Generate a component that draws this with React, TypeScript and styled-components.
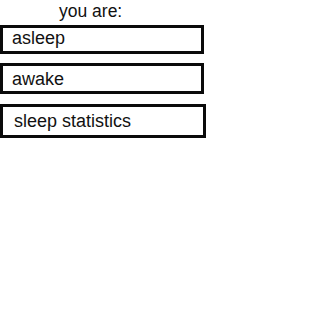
import React from "react";
import styled, { createGlobalStyle } from "styled-components";

const Global = createGlobalStyle`
  html, body {
    margin: 0;
    padding: 0;
    background: #ffffff;
  }
  body {
    font-family: "Liberation Sans", Arial, sans-serif;
  }
`;

const Screen = styled.div`
  width: 207px;
  height: 310px;
  background: #ffffff;
  display: flex;
  flex-direction: column;
  overflow: hidden;
`;

const Title = styled.div`
  font-size: 17.5px;
  line-height: 20px;
  color: #111111;
  padding: 1px 0 0 59px;
  height: 21px;
  margin-bottom: 3px;
`;

const Menu = styled.div`
  display: flex;
  flex-direction: column;
  gap: 9px;
`;

const MenuButton = styled.div<{ $w: number; $h: number; $shift: number; $pad: number; $mt?: number }>`
  box-sizing: border-box;
  width: ${(p) => p.$w}px;
  height: ${(p) => p.$h}px;
  margin-top: ${(p) => p.$mt ?? 0}px;
  border: 3px solid #0a0a0a;
  display: flex;
  align-items: center;
  padding-left: ${(p) => p.$pad}px;
  padding-top: ${(p) => Math.max(p.$shift, 0) * 2}px;
  padding-bottom: ${(p) => Math.max(-p.$shift, 0) * 2}px;
  font-size: 18px;
  color: #111111;
  background: #ffffff;
`;

export default function App() {
  return (
    <>
      <Global />
      <Screen>
        <Title>you are:</Title>
        <Menu>
          <MenuButton $w={204} $h={29} $shift={-1} $pad={9}>asleep</MenuButton>
          <MenuButton $w={204} $h={31} $shift={1} $pad={9}>awake</MenuButton>
          <MenuButton $w={206} $h={34} $shift={0} $pad={11} $mt={1}>sleep statistics</MenuButton>
        </Menu>
      </Screen>
    </>
  );
}
